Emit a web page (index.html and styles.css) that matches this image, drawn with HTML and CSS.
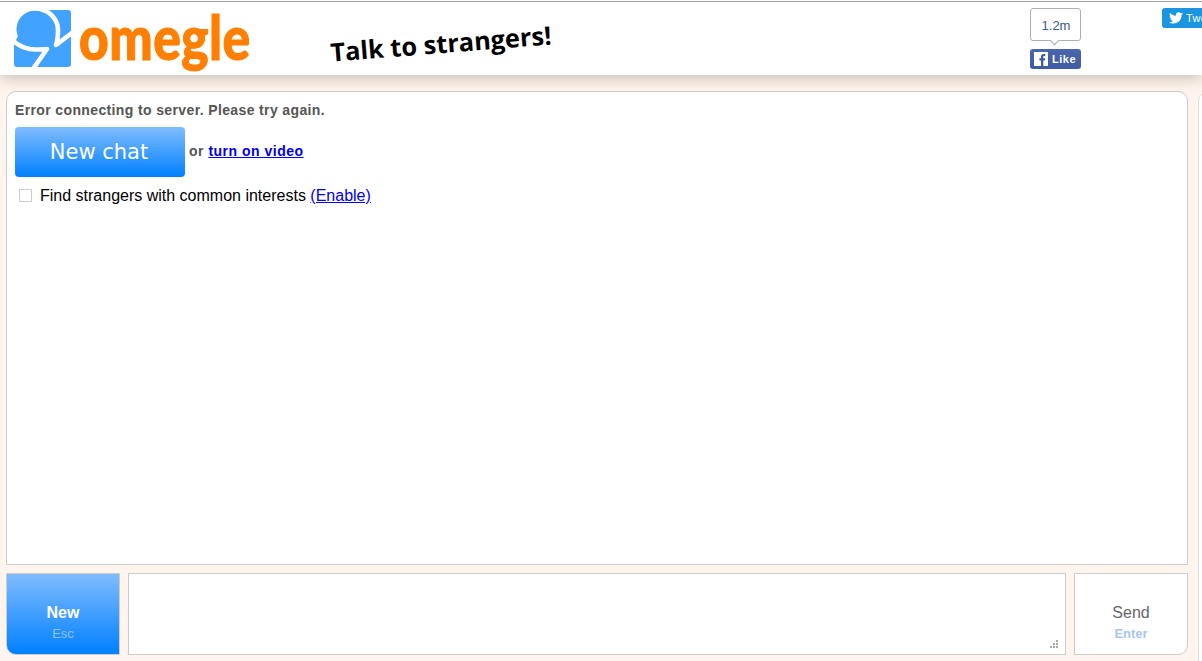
FILE: index.html
```html
<!DOCTYPE html>
<html>
    <head>
        <title>Omegle</title>
        <link rel="stylesheet" href="styles.css">
    </head>
    <body>
        <div class="header">
            <svg class="logoIcon" width="57" height="57" viewBox="0 0 57 57">
                <rect width="57" height="57" rx="3" fill="#42a2ff"/>
                <path d="M0 0H30V8L8 18L0 34Z" fill="#fff"/>
                <circle cx="21" cy="19.200" r="18.500" fill="#42a2ff"/>
                <path d="M-2 30C6 37 14 39.500 21 39.500C26 39.500 30 39.500 33 39L19 59" fill="none" stroke="#fff" stroke-width="4.600" stroke-linejoin="round"/>
                <path d="M28 -1C38 3 44 11 44 20C44 26 43.500 31 42 35L59 22" fill="none" stroke="#fff" stroke-width="4.600" stroke-linejoin="round"/>
            </svg>
            <div class="logoText">omegle</div>
            <div class="tagline">Talk to strangers!</div>
            <div class="fbBox">
                <div class="fbCount">1.2m</div>
                <div class="fbLike">
                    <svg class="fbIcon" width="14" height="14" viewBox="0 0 14 14">
                        <rect width="14" height="14" fill="#fff"/>
                        <path d="M7 14V8.500H5.400V6.300H7V4.800C7 3 8 2 9.700 2H11.200V4.100H10.200C9.500 4.100 9.300 4.400 9.300 5V6.300H11.200L10.900 8.500H9.300V14Z" fill="#3f5ba4"/>
                    </svg>
                    <span>Like</span>
                </div>
            </div>
            <div class="tweetButton">
                <svg width="14" height="12" viewBox="0 0 24 20">
                    <path d="M24 2.400c-.9.400-1.800.7-2.800.8 1-.6 1.800-1.600 2.200-2.700-1 .6-2 1-3.100 1.200C19.300.7 18 0 16.600 0c-3.200 0-5.500 3-4.800 6C7.700 5.800 4.100 3.900 1.700.9.400 3.100 1 6 3.200 7.500c-.8 0-1.600-.2-2.200-.6-.1 2.300 1.600 4.400 3.900 4.900-.7.200-1.500.2-2.200.1.600 1.900 2.400 3.300 4.600 3.400-2.100 1.600-4.700 2.300-7.300 2 2.200 1.400 4.800 2.200 7.500 2.200 9.100 0 14.300-7.700 14-14.600 1-.7 1.800-1.600 2.500-2.500z" fill="#fff"/>
                </svg>
                <span>Tweet</span>
            </div>
        </div>
        <div class="main">
            <div class="chatColumn">
                <div class="logBox">
                    <p class="statusLine">Error connecting to server. Please try again.</p>
                    <div class="startRow">
                        <div class="newChat">New chat</div>
                        <span class="orText">or <a href="#">turn on video</a></span>
                    </div>
                    <div class="interestRow">
                        <span class="checkBox"></span>
                        <span>Find strangers with common interests <a href="#">(Enable)</a></span>
                    </div>
                </div>
                <div class="controls">
                    <div class="newButton">
                        <div class="btnLabel">New</div>
                        <div class="btnKey">Esc</div>
                    </div>
                    <div class="messageBox">
                        <svg class="grip" width="9" height="9" viewBox="0 0 9 9">
                            <path d="M6 0h2v2H6zM3 3h2v2H3zM6 3h2v2H6zM0 6h2v2H0zM3 6h2v2H3zM6 6h2v2H6z" fill="#a9a9a9"/>
                        </svg>
                    </div>
                    <div class="sendButton">
                        <div class="btnLabel">Send</div>
                        <div class="btnKey">Enter</div>
                    </div>
                </div>
            </div>
            <div class="sidePanel"></div>
        </div>
    </body>
</html>
```
FILE: styles.css
```css
html, body {
 height: 100%;
 overflow: hidden;
}
body {
 margin: 0;
 background-color: #fff5ee;
 font-family: "Liberation Sans", Arial, sans-serif;
 color: #000;
}
a {
 color: #0000ee;
}

.header {
 display: flex;
 align-items: flex-start;
 height: 75px;
 padding-top: 1px;
 box-sizing: border-box;
 background-color: #fff;
 box-shadow: inset 0 1px 0 #fff, inset 0 2px 0 #a3a3a3, 0 3px 14px rgba(90, 85, 75, 0.35);
 position: relative;
}
.logoIcon {
 margin: 9px 0 0 14px;
 flex: none;
}
.logoText {
 width: 172px;
 margin: 4px 0 0 8px;
 font-family: "Lato", sans-serif;
 font-size: 56px;
 font-weight: 900;
 line-height: 64px;
 color: #ff7f00;
 -webkit-text-stroke: 1px #ff7f00;
 letter-spacing: 0.5px;
 transform: scale(0.92, 1.08);
 transform-origin: left center;
 flex: none;
}
.tagline {
 width: 224px;
 margin: 25px 0 0 79px;
 font-family: "Open Sans", sans-serif;
 font-size: 25.4px;
 font-weight: 700;
 line-height: 34px;
 white-space: nowrap;
 transform: rotate(-4.5deg);
 flex: none;
}

.fbBox {
 width: 51px;
 margin: 7px 0 0 476px;
 flex: none;
}
.fbCount {
 position: relative;
 height: 31px;
 padding-left: 1px;
 line-height: 33px;
 text-align: center;
 font-size: 13px;
 color: #3b5a8c;
 background-color: #fff;
 border: 1px solid #a9afbb;
 border-radius: 3px;
 margin-bottom: 8px;
}
.fbCount:after {
 content: "";
 position: absolute;
 left: 20px;
 bottom: -4px;
 width: 6px;
 height: 6px;
 background-color: #fff;
 border-right: 1px solid #a9afbb;
 border-bottom: 1px solid #a9afbb;
 transform: rotate(45deg);
}
.fbLike {
 display: flex;
 align-items: center;
 height: 20px;
 padding-left: 4px;
 box-sizing: border-box;
 background: linear-gradient(#4a66ad, #3f5ba4);
 border-radius: 3px;
 color: #fff;
 font-size: 11px;
 font-weight: 700;
 letter-spacing: 0.5px;
}
.fbIcon {
 margin-right: 4px;
 flex: none;
}

.tweetButton {
 display: flex;
 align-items: center;
 gap: 3px;
 width: 60px;
 height: 20px;
 margin: 7px 0 0 81px;
 padding-left: 7px;
 box-sizing: border-box;
 background-color: #1b95e0;
 border-radius: 3px;
 color: #fff;
 font-size: 11px;
 font-weight: 400;
 letter-spacing: 0.3px;
 flex: none;
}

.main {
 display: flex;
 padding: 16px 0 0 6px;
}
.chatColumn {
 width: 1182px;
 flex: none;
}
.logBox {
 height: 474px;
 box-sizing: border-box;
 padding: 10px 8px 0 8px;
 background-color: #fff;
 border: 1px solid #ccc;
 border-radius: 10px 10px 0 0;
}
.statusLine {
 margin: 0;
 font-size: 14px;
 font-weight: 700;
 line-height: 16px;
 letter-spacing: 0.37px;
 color: #555;
}
.startRow {
 display: flex;
 align-items: center;
 margin-top: 9px;
}
.newChat {
 width: 170px;
 height: 50px;
 padding-right: 2px;
 box-sizing: border-box;
 line-height: 50px;
 text-align: center;
 font-family: "DejaVu Sans", sans-serif;
 font-size: 21px;
 color: #fff;
 background: linear-gradient(#80bcff, #0080ff);
 border-radius: 4px;
}
.orText {
 margin: -2px 0 0 4px;
 font-size: 14px;
 font-weight: 700;
 letter-spacing: 0.5px;
 color: #555;
}
.interestRow {
 display: flex;
 align-items: center;
 margin: 10px 0 0 4px;
 font-size: 16px;
 line-height: 18px;
}
.checkBox {
 width: 11px;
 height: 11px;
 margin: -2px 8px 0 0;
 border: 1px solid #ccc;
}

.controls {
 display: flex;
 gap: 8px;
 height: 82px;
 margin-top: 8px;
}
.newButton, .sendButton {
 width: 114px;
 box-sizing: border-box;
 padding-top: 30px;
 border: 1px solid #ccc;
 text-align: center;
 flex: none;
}
.newButton {
 background: linear-gradient(#80bcff, #0080ff);
 border-radius: 0 0 0 10px;
 color: #fff;
}
.newButton .btnLabel {
 font-weight: 700;
}
.newButton .btnKey {
 color: #8cc4ff;
 font-weight: 400;
}
.sendButton {
 background-color: #fff;
 border-radius: 0 0 10px 0;
 color: #666;
}
.btnLabel {
 font-size: 16px;
 line-height: 18px;
}
.btnKey {
 margin-top: 4px;
 font-size: 13px;
 font-weight: 700;
 line-height: 15px;
 color: #a6c8ee;
}
.messageBox {
 position: relative;
 flex: 1;
 background-color: #fff;
 border: 1px solid #ccc;
}
.grip {
 position: absolute;
 right: 6px;
 bottom: 5px;
}

.sidePanel {
 width: 40px;
 height: 600px;
 margin-left: 10px;
 background-color: #fff;
 border: 1px solid #ddd;
 border-radius: 10px 0 0 0;
 flex: none;
}
```
